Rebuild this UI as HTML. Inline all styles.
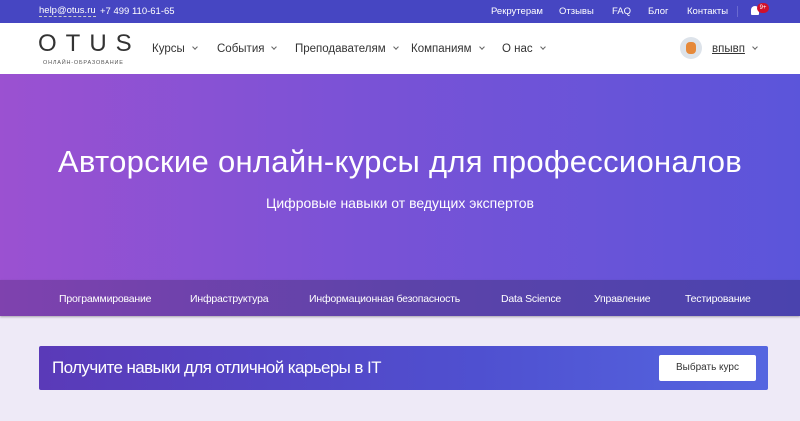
<!DOCTYPE html>
<html><head><meta charset="utf-8"><style>
*{margin:0;padding:0;box-sizing:border-box}
body{width:800px;height:421px;overflow:hidden;background:#eeeaf7;font-family:"Liberation Sans","Noto Sans CJK SC",sans-serif;position:relative}
.top{position:absolute;left:0;top:0;width:800px;height:23px;background:#4646c2;color:#fff;font-size:9.5px}
.top span{position:absolute;top:6px}
.hdr{position:absolute;left:0;top:23px;width:800px;height:51px;background:#fff;color:#333;font-size:11.5px}
.hdr .m{position:absolute;top:20px}
.chev{display:inline-block;width:4px;height:4px;border-right:1px solid #666;border-bottom:1px solid #666;transform:rotate(45deg);margin-left:8px;position:relative;top:-3px}
.hero{position:absolute;left:0;top:74px;width:800px;height:206px;background:linear-gradient(90deg,#9b51d1,#7a52d6 45%,#5b55da)}
.hero h1{position:absolute;top:70px;width:800px;text-align:center;font-weight:300;color:#fff;font-size:31px;letter-spacing:0.3px}
.hero p{position:absolute;top:121px;width:800px;text-align:center;color:#fff;font-size:14px}
.cat{position:absolute;left:0;top:280px;width:800px;height:36px;background:linear-gradient(90deg,#7f42ae,#5d43a9 50%,#4a43ae);color:#fff;font-size:10.5px;box-shadow:0 1px 2px rgba(0,0,0,.3)}
.cat span{position:absolute;top:13px;letter-spacing:-0.2px}
.ban{position:absolute;left:39px;top:346px;width:729px;height:44px;border-radius:2px;background:linear-gradient(90deg,#5a3ab8,#4f50d0 60%,#5566e0)}
.ban .t{position:absolute;left:13px;top:12px;color:#fff;font-size:17px;font-weight:300;letter-spacing:-0.6px}
.ban .b{position:absolute;left:620px;top:9px;width:97px;height:26px;background:#fff;border-radius:2px;font-size:10px;color:#333;text-align:center;line-height:26px}
</style></head><body>
<div class="top">
<span style="left:39px;border-bottom:1px dashed #ccc;line-height:10px">help@otus.ru</span>
<span style="left:100px">+7 499 110-61-65</span>
<span style="left:491px">Рекрутерам</span>
<span style="left:559px">Отзывы</span>
<span style="left:612px">FAQ</span>
<span style="left:648px">Блог</span>
<span style="left:687px">Контакты</span>
<div style="position:absolute;left:737px;top:6px;width:1px;height:11px;background:#6a6ad0"></div>
<div style="position:absolute;left:751px;top:6px;width:8px;height:9px;background:#fff;border-radius:4px 4px 1px 1px"></div>
<div style="position:absolute;left:757px;top:3px;width:12px;height:10px;background:#d0102a;border-radius:5px;font-size:6px;line-height:10px;text-align:center;color:#fff">9+</div>
</div>
<div class="hdr">
<div style="position:absolute;left:38px;top:7px;font-size:24px;letter-spacing:9px;color:#333;font-weight:300">OTUS</div>
<div style="position:absolute;left:43px;top:37px;font-size:5.5px;letter-spacing:.8px;color:#555">ОНЛАЙН-ОБРАЗОВАНИЕ</div>
<span class="m" style="left:152px">Курсы<i class="chev"></i></span>
<span class="m" style="left:217px">События<i class="chev"></i></span>
<span class="m" style="left:295px">Преподавателям<i class="chev"></i></span>
<span class="m" style="left:411px">Компаниям<i class="chev"></i></span>
<span class="m" style="left:502px">О нас<i class="chev"></i></span>
<div style="position:absolute;left:680px;top:14px;width:22px;height:22px;border-radius:50%;background:#dde3ea"><div style="margin:5px auto;width:10px;height:12px;border-radius:4px;background:#e6893a"></div></div>
<span class="m" style="left:712px;text-decoration:underline">впывп<i class="chev"></i></span>
</div>
<div class="hero"><h1>Авторские онлайн-курсы для профессионалов</h1><p>Цифровые навыки от ведущих экспертов</p></div>
<div class="cat">
<span style="left:59px">Программирование</span>
<span style="left:190px">Инфраструктура</span>
<span style="left:309px">Информационная безопасность</span>
<span style="left:501px">Data Science</span>
<span style="left:594px">Управление</span>
<span style="left:685px">Тестирование</span>
</div>
<div class="ban"><div class="t">Получите навыки для отличной карьеры в IT</div><div class="b">Выбрать курс</div></div>
</body></html>
